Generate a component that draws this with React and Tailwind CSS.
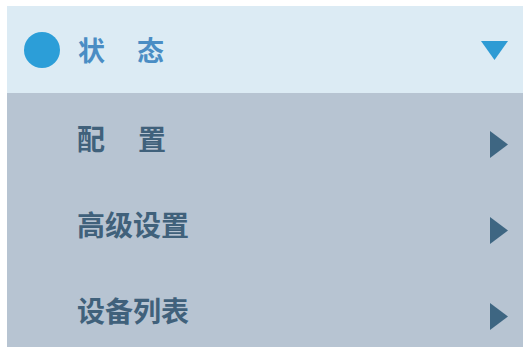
export default function App() {
  const font = { fontFamily: '"Noto Sans CJK SC", "Noto Sans", sans-serif' };
  const items = [["配", "置"], ["高级设置"], ["设备列表"]];
  return (
    <div className="w-[531px] h-[351px] bg-white pt-[6px] pl-[7px]" style={font}>
      <div className="w-[516px]">
        <div className="h-[87px] bg-[#dcebf4] flex items-center pl-[17px] pr-[15px]">
          <div className="w-[36px] h-[36px] rounded-full bg-[#2c9ed8]" />
          <div className="ml-[18px] flex gap-[32px] text-[27px] font-bold leading-none text-[#4a8dc4]">
            <span>状</span>
            <span>态</span>
          </div>
          <svg className="ml-auto mt-[2px]" width="27" height="19" viewBox="0 0 27 19">
            <polygon points="0,0 27,0 13.5,19" fill="#2e9bd4" />
          </svg>
        </div>
        <div className="h-[254px] bg-[#b7c4d2] pt-[2px] flex flex-col overflow-hidden">
          {items.map((parts, i) => (
            <div key={i} className="h-[86px] shrink-0 flex items-center pl-[70px] pr-[15px]">
              <div className="flex gap-[33px] text-[28px] font-bold leading-none text-[#40617b]">
                {parts.map((p) => (
                  <span key={p}>{p}</span>
                ))}
              </div>
              <svg className="ml-auto mt-[12px]" width="18" height="27" viewBox="0 0 18 27">
                <polygon points="0,0 18,13.5 0,27" fill="#3e6682" />
              </svg>
            </div>
          ))}
        </div>
      </div>
    </div>
  );
}
